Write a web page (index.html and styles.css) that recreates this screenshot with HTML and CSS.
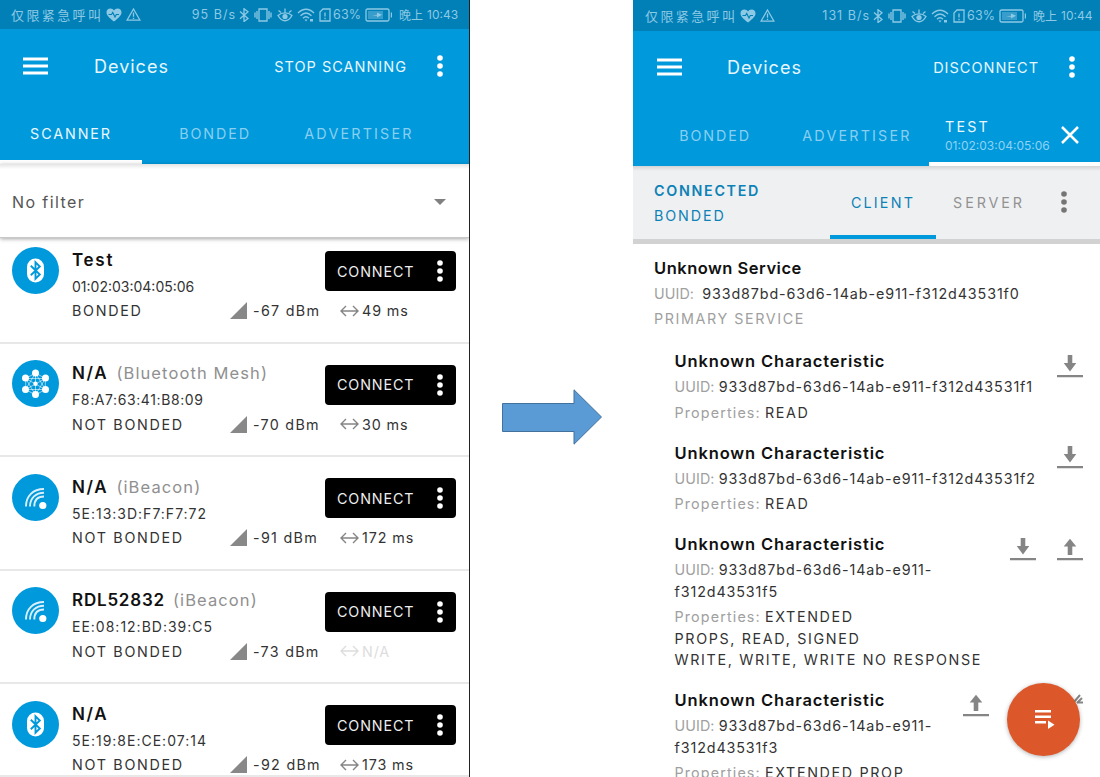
FILE: index.html
```html
<!DOCTYPE html>
<html lang="en">
<head>
<meta charset="utf-8">
<title>Devices</title>
<link rel="stylesheet" href="styles.css">
</head>
<body>
<svg class="defs" aria-hidden="true">
  <symbol id="heart" viewBox="0 0 16 14"><path fill="currentColor" d="M8 13.6C3 9.600.5 7.500.5 4.300.500 2 2.200.500 4.300.500 6 .5 7.300 1.400 8 2.600 8.700 1.400 10 .5 11.700.500 13.800.500 15.500 2 15.500 4.300 15.500 7.500 13 9.600 8 13.600z"/><path class="cut" d="M2.500 6.500h3l1.200-2 2.300 4.500 1.300-2.500H13"/></symbol>
  <symbol id="warn" viewBox="0 0 15 13"><path class="ln" d="M7.500 1 14 12.200H1z"/><path class="ln" d="M7.500 4.500v4.200M7.500 9.700v1.200"/></symbol>
  <symbol id="bt" viewBox="0 0 10 14"><path class="ln" d="M1 3.500l8 7-4 3V.7l4 3-8 7"/></symbol>
  <symbol id="vibrate" viewBox="0 0 18 14"><path class="ln" d="M5 1h8v12H5zM3 3v8M15 3v8M1 4.500v5M17 4.500v5"/></symbol>
  <symbol id="eye" viewBox="0 0 16 14"><path class="ln" d="M1 7.500c4 7 10 7 14 0C11 4 5 4 1 7.500zM8 4.500V.5M4 4.500 1.500 2.500M12 4.500 14.500 2.500"/><circle cx="8" cy="8.500" r="2.600" fill="currentColor"/></symbol>
  <symbol id="wifi" viewBox="0 0 18 14"><path class="ln" d="M1 5c5-5 11-5 16 0M3.500 7.800c3.500-3.500 7.500-3.500 11 0M6 10.300c2-2 4-2 6 0"/><path fill="currentColor" d="M7.500 11.500h3L9 13.500zM13 11h3v2.500h-3z"/></symbol>
  <symbol id="sim" viewBox="0 0 12 14"><path class="ln" d="M4 1h7v12H1V4zM6 4.500v4M6 9.700v1.500"/></symbol>
  <symbol id="battery" viewBox="0 0 28 14"><rect class="ln" x="1" y="1" width="23" height="12" rx="1.500"/><path opacity=".4" fill="currentColor" d="M3 3h15v8H3z"/><path fill="currentColor" d="M7 7.500l5-.8V4.500l5 2.300-5 2.700V7.800zM25.800 4.500h1.200v5h-1.200z"/></symbol>
  <symbol id="menu" viewBox="0 0 25 18"><path fill="#fff" d="M0 .5h25v3H0zM0 7.500h25v3H0zM0 14.500h25v3H0z"/></symbol>
  <symbol id="dots" viewBox="0 0 6 22"><g fill="currentColor"><circle cx="3" cy="3" r="2.800"/><circle cx="3" cy="11" r="2.800"/><circle cx="3" cy="19" r="2.800"/></g></symbol>
  <symbol id="d-bt" viewBox="0 0 47 47"><circle cx="23.500" cy="23.500" r="23.500" fill="#0099dc"/><rect x="15" y="11.500" width="17" height="24" rx="8.500" fill="#fff"/><path fill="none" stroke="#0099dc" stroke-width="1.900" d="M18.800 18.800l9 8.700-4.300 4.200V15.300l4.300 4.200-9 8.700"/></symbol>
  <symbol id="d-mesh" viewBox="0 0 47 47"><circle cx="23.500" cy="23.500" r="23.500" fill="#0099dc"/><path fill="none" stroke="#fff" stroke-width=".7" opacity=".8" d="M23.500 13l9.800 5.500v11L23.500 35l-9.800-5.500v-11zM23.500 13l9.800 16.500H13.700zM23.500 35l-9.800-16.500h19.600zM23.500 13v22M13.700 18.500l19.600 11M33.300 18.500l-19.600 11"/><g fill="#fff"><circle cx="23.500" cy="13" r="3.500"/><circle cx="33.500" cy="18" r="3.500"/><circle cx="33.500" cy="29.500" r="3.500"/><circle cx="23.500" cy="34.500" r="3.500"/><circle cx="13.500" cy="29.500" r="3.500"/><circle cx="13.500" cy="18" r="3.500"/><circle cx="23.500" cy="23.800" r="2.200"/></g></symbol>
  <symbol id="d-beacon" viewBox="0 0 47 47"><circle cx="23.500" cy="23.500" r="23.500" fill="#0099dc"/><path fill="none" stroke="#d9f0fb" stroke-width="1.900" d="M14 32.500C14 22 21 15 32 15M18 32.500C18 24 24 18.700 32 18.700M22.300 32.500C22.300 26 26 22.500 32 22.500"/><circle cx="30.800" cy="31.500" r="3.600" fill="#fff"/></symbol>
  <symbol id="signal" viewBox="0 0 17 17"><path fill="#888" d="M17 0v17H0z"/></symbol>
  <symbol id="range" viewBox="0 0 19 12"><path fill="none" stroke="currentColor" stroke-width="1.400" d="M1 6h17M6 1 1 6l5 5M13 1l5 5-5 5"/></symbol>
  <symbol id="down" viewBox="0 0 26 23"><path fill="#858585" d="M10.700 0h4.600v8h4L13 16.500 6.700 8h4zM0 20h26v2.200H0z"/></symbol>
  <symbol id="up" viewBox="0 0 26 23"><path fill="#858585" d="M10.700 17h4.600V8.500h4L13 .8 6.700 8.500h4zM0 20h26v2.200H0z"/></symbol>
</svg>

<main class="stage">
  <section class="phone left">
    <div class="status">
      <span class="carrier">仅限紧急呼叫</span><svg class="i-heart"><use href="#heart"/></svg><svg class="i-warn"><use href="#warn"/></svg>
      <span class="rate">95 B/s</span><svg class="i-bt"><use href="#bt"/></svg><svg class="i-vib"><use href="#vibrate"/></svg><svg class="i-eye"><use href="#eye"/></svg><svg class="i-wifi"><use href="#wifi"/></svg><svg class="i-sim"><use href="#sim"/></svg><span class="pct">63%</span><svg class="i-bat"><use href="#battery"/></svg><span class="clock"><span class="cn">晚上</span><span>10:43</span></span>
    </div>
    <header class="bar">
      <svg class="i-menu"><use href="#menu"/></svg><h1>Devices</h1><span class="action scan">STOP SCANNING</span><svg class="i-dots"><use href="#dots"/></svg>
    </header>
    <nav class="tabs"><span class="tab on">SCANNER</span><span class="tab">BONDED</span><span class="tab adv">ADVERTISER</span></nav>
    <div class="filter"><span>No filter</span><i class="caret"></i></div>
    <ul class="devices">
      <li>
        <svg class="avatar"><use href="#d-bt"/></svg>
        <div class="info"><p class="name"><b>Test</b></p><p class="mac m1">01:02:03:04:05:06</p>
        <p class="meta"><span class="bond">BONDED</span><svg class="i-sig"><use href="#signal"/></svg><span class="dbm">-67 dBm</span><svg class="i-rng"><use href="#range"/></svg><span class="ms">49 ms</span></p></div>
        <div class="connect"><span>CONNECT</span><svg class="i-dots"><use href="#dots"/></svg></div>
      </li>
      <li>
        <svg class="avatar"><use href="#d-mesh"/></svg>
        <div class="info"><p class="name"><b>N/A</b><span class="kind">(Bluetooth Mesh)</span></p><p class="mac m2">F8:A7:63:41:B8:09</p>
        <p class="meta"><span class="bond">NOT BONDED</span><svg class="i-sig"><use href="#signal"/></svg><span class="dbm">-70 dBm</span><svg class="i-rng"><use href="#range"/></svg><span class="ms">30 ms</span></p></div>
        <div class="connect"><span>CONNECT</span><svg class="i-dots"><use href="#dots"/></svg></div>
      </li>
      <li>
        <svg class="avatar"><use href="#d-beacon"/></svg>
        <div class="info"><p class="name"><b>N/A</b><span class="kind">(iBeacon)</span></p><p class="mac">5E:13:3D:F7:F7:72</p>
        <p class="meta"><span class="bond">NOT BONDED</span><svg class="i-sig"><use href="#signal"/></svg><span class="dbm">-91 dBm</span><svg class="i-rng"><use href="#range"/></svg><span class="ms">172 ms</span></p></div>
        <div class="connect"><span>CONNECT</span><svg class="i-dots"><use href="#dots"/></svg></div>
      </li>
      <li>
        <svg class="avatar"><use href="#d-beacon"/></svg>
        <div class="info"><p class="name"><b class="rdl">RDL52832</b><span class="kind">(iBeacon)</span></p><p class="mac">EE:08:12:BD:39:C5</p>
        <p class="meta"><span class="bond">NOT BONDED</span><svg class="i-sig"><use href="#signal"/></svg><span class="dbm">-73 dBm</span><svg class="i-rng faint"><use href="#range"/></svg><span class="ms faint">N/A</span></p></div>
        <div class="connect"><span>CONNECT</span><svg class="i-dots"><use href="#dots"/></svg></div>
      </li>
      <li>
        <svg class="avatar"><use href="#d-bt"/></svg>
        <div class="info"><p class="name"><b>N/A</b></p><p class="mac">5E:19:8E:CE:07:14</p>
        <p class="meta"><span class="bond">NOT BONDED</span><svg class="i-sig"><use href="#signal"/></svg><span class="dbm">-92 dBm</span><svg class="i-rng"><use href="#range"/></svg><span class="ms">173 ms</span></p></div>
        <div class="connect"><span>CONNECT</span><svg class="i-dots"><use href="#dots"/></svg></div>
      </li>
    </ul>
  </section>

  <div class="between">
    <svg class="arrow" viewBox="0 0 100 56"><path fill="#5b9bd5" stroke="#41719c" stroke-width="1" d="M.5 14.500h71.500V.8L99.500 28 72 55.200V42.500H.5z"/></svg>
  </div>

  <section class="phone right">
    <div class="status">
      <span class="carrier">仅限紧急呼叫</span><svg class="i-heart"><use href="#heart"/></svg><svg class="i-warn"><use href="#warn"/></svg>
      <span class="rate">131 B/s</span><svg class="i-bt"><use href="#bt"/></svg><svg class="i-vib"><use href="#vibrate"/></svg><svg class="i-eye"><use href="#eye"/></svg><svg class="i-wifi"><use href="#wifi"/></svg><svg class="i-sim"><use href="#sim"/></svg><span class="pct">63%</span><svg class="i-bat"><use href="#battery"/></svg><span class="clock"><span class="cn">晚上</span><span>10:44</span></span>
    </div>
    <header class="bar">
      <svg class="i-menu"><use href="#menu"/></svg><h1>Devices</h1><span class="action disc">DISCONNECT</span><svg class="i-dots"><use href="#dots"/></svg>
    </header>
    <nav class="tabs"><span class="tab">BONDED</span><span class="tab adv">ADVERTISER</span>
      <div class="tab device on"><div><p class="dname">TEST</p><p class="daddr">01:02:03:04:05:06</p></div><svg class="i-x" viewBox="0 0 18 18"><path stroke="#fff" stroke-width="2.500" d="M1 1l16 16M17 1 1 17"/></svg></div>
    </nav>
    <div class="sub">
      <div class="state"><p class="conn">CONNECTED</p><p class="bonded">BONDED</p></div>
      <span class="side client">CLIENT</span><span class="side server">SERVER</span><svg class="i-dots"><use href="#dots"/></svg>
    </div>
    <div class="service">
      <h2>Unknown Service</h2>
      <p class="line"><span class="k wide">UUID:</span> <span class="hex">933d87bd-63d6-14ab-e911-f312d43531f0</span></p>
      <p class="line k primary">PRIMARY SERVICE</p>
    </div>
    <div class="chars">
      <article>
        <h2>Unknown Characteristic</h2>
        <p class="line"><span class="k">UUID:</span> <span class="hex">933d87bd-63d6-14ab-e911-f312d43531f1</span></p>
        <p class="line"><span class="k pr">Properties:</span> <span class="caps">READ</span></p>
        <div class="ops"><svg><use href="#down"/></svg></div>
      </article>
      <article>
        <h2>Unknown Characteristic</h2>
        <p class="line"><span class="k">UUID:</span> <span class="hex">933d87bd-63d6-14ab-e911-f312d43531f2</span></p>
        <p class="line"><span class="k pr">Properties:</span> <span class="caps">READ</span></p>
        <div class="ops"><svg><use href="#down"/></svg></div>
      </article>
      <article>
        <h2>Unknown Characteristic</h2>
        <p class="line"><span class="k">UUID:</span> <span class="hex">933d87bd-63d6-14ab-e911-<br>f312d43531f5</span></p>
        <p class="line"><span class="k pr">Properties:</span> <span class="caps">EXTENDED<br>PROPS, READ, SIGNED<br>WRITE, WRITE, WRITE NO RESPONSE</span></p>
        <div class="ops"><svg><use href="#down"/></svg><svg><use href="#up"/></svg></div>
      </article>
      <article>
        <h2>Unknown Characteristic</h2>
        <p class="line"><span class="k">UUID:</span> <span class="hex">933d87bd-63d6-14ab-e911-<br>f312d43531f3</span></p>
        <p class="line"><span class="k pr">Properties:</span> <span class="caps">EXTENDED PROP</span></p>
        <div class="ops"><svg><use href="#up"/></svg><svg viewBox="0 0 26 23"><path fill="#858585" d="M7 1h3v3H7z"/></svg><svg viewBox="0 0 26 23"><path stroke="#858585" stroke-width="2" d="M17 8l6-7M20 9l5-5M20 8.500h6"/></svg></div>
      </article>
    </div>
    <div class="fab"><svg viewBox="0 0 20 19"><path fill="#fff" d="M0 0h16v2.500H0zM0 5.500h16v2.500H0zM0 11h11v2.500H0zM13 10.500l6.500 4.300-6.500 4.200z"/></svg></div>
  </section>
</main>
</body>
</html>
```

FILE: styles.css
```css
* { box-sizing: border-box; margin: 0; padding: 0; }
body { width: 1100px; height: 777px; overflow: hidden; background: #fff; font-family: Inter, "Noto Sans CJK SC", sans-serif; font-size: 14.300px; color: #333; }
.defs { position: absolute; width: 0; height: 0; }
svg { display: block; flex: none; }
.ln { fill: none; stroke: currentColor; stroke-width: 1.300; }
.cut { fill: none; stroke: #0080b7; stroke-width: 1.100; }
.stage { display: flex; height: 777px; }
.phone { position: relative; display: flex; flex-direction: column; height: 777px; overflow: hidden; white-space: nowrap; }
.left { width: 470px; border-right: 1px solid #222; }
.right { width: 467px; }
.between { width: 163px; padding: 389px 0 0 32px; }
.arrow { width: 100px; height: 56px; }

/* status bar */
.status { display: flex; align-items: center; flex: none; height: 29px; padding-left: 11px; background: #0080b7; color: #8dc9e5; font-size: 12.500px; }
.carrier { width: 95px; font-size: 13px; letter-spacing: 2.400px; }
.i-heart { width: 16px; height: 14px; }
.i-warn { width: 15px; height: 13px; margin-left: 4px; }
.rate { width: 95px; margin-right: 3px; text-align: right; letter-spacing: 1px; }
.i-bt { width: 10px; height: 14px; }
.i-vib { width: 18px; height: 14px; margin-left: 5px; }
.i-eye { width: 16px; height: 14px; margin-left: 5px; }
.i-wifi { width: 18px; height: 14px; margin-left: 4px; }
.i-sim { width: 12px; height: 14px; margin-left: 4px; }
.pct { width: 30px; margin-left: 2px; letter-spacing: .2px; }
.i-bat { width: 28px; height: 14px; margin-left: 2px; }
.clock { display: flex; align-items: center; gap: 4px; margin-left: 6px; font-size: 12px; }
.cn { font-size: 12px; }

/* app bar */
.bar { display: flex; align-items: center; flex: none; height: 75px; padding: 0 26px 0 23px; background: #0099dc; color: #e8f6fd; }
.i-menu { width: 25px; height: 18px; margin-top: -2px; }
.bar h1 { margin-left: 46px; font-size: 18px; font-weight: 400; letter-spacing: 1px; }
.action { margin-left: auto; margin-right: 30px; font-size: 14.500px; letter-spacing: 1px; }
.i-dots { width: 6px; height: 22px; color: #fff; }
.bar .i-dots { margin-top: -1px; }
.tabs { display: flex; flex: none; height: 60px; background: #0099dc; color: #8bcff0; }
.tab { width: 142px; padding-top: 21px; text-align: center; letter-spacing: 1.900px; line-height: 18px; }
.tab.adv { letter-spacing: 2.200px; }
.left .tab:nth-child(2) { width: 146px; }
.tab.on { color: #eaf7fd; border-bottom: 4px solid #fff; }

.filter { display: flex; align-items: center; justify-content: space-between; flex: none; position: relative; height: 74px; padding: 3px 23px 0 12px; font-size: 16px; letter-spacing: 1.400px; color: #555; background: linear-gradient(#e4e4e4, #fff 5px); border-bottom: 1px solid #c8c8c8; box-shadow: 0 1px 4px rgba(0,0,0,.35); }
.caret { border: 6.500px solid transparent; border-top-color: #808080; border-bottom: 0; }
.devices { list-style: none; margin-top: -8px; }
.devices li { display: flex; height: 113.500px; padding: 17px 13px 0 12px; border-bottom: 2px solid #e8e8e8; }
.devices li:last-child { height: 93px; }
.avatar { width: 47px; height: 47px; margin-top: -.5px; }
.info { width: 252px; margin: -1px 0 0 13px; }
.info p { display: flex; align-items: center; }
.name { height: 27px; font-size: 16.500px; letter-spacing: 1.100px; color: #111; }
.name b { font-weight: 600; font-size: 17px; letter-spacing: 1.700px; }
.name .rdl { letter-spacing: .8px; }
.kind { margin-left: 8px; color: #909090; }
.mac { height: 26px; letter-spacing: 1px; font-size: 14px; }
.m1 { letter-spacing: 0; }
.m2 { letter-spacing: .6px; }
.meta { height: 23px; width: 350px; }
.bond { width: 158px; letter-spacing: 1.700px; }
.i-sig { width: 17px; height: 17px; }
.dbm { width: 93px; padding-left: 6px; letter-spacing: 1.300px; }
.i-rng { width: 19px; height: 12px; color: #858585; }
.ms { margin-left: 3px; letter-spacing: .9px; }
.faint, .i-rng.faint { color: #ddd; }
.connect { display: flex; align-items: center; justify-content: space-between; width: 131px; height: 40px; margin: 4px 0 0 1px; padding: 0 13px 0 12px; border-radius: 4px; background: #000; color: #eee; letter-spacing: .9px; position: relative; }

/* connected device */
.right .status { height: 31px; padding-left: 12px; }
.right .bar { height: 73px; padding: 0 25px 0 24px; }
.right .bar h1 { margin-left: 45px; }
.right .tabs { height: 62px; padding-left: 11px; }
.right .tab { padding-top: 23px; }
.right .device { display: flex; justify-content: space-between; width: 171px; margin-left: 1px; padding: 14px 21px 0 16px; text-align: left; letter-spacing: 2.200px; }
.right .device .daddr { font-size: 12px; letter-spacing: 0; color: #8fd2f2; line-height: 20px; }
.i-x { width: 18px; height: 18px; margin-top: 8px; }
.sub { display: flex; flex: none; height: 78px; padding-left: 21px; background: linear-gradient(#d2d4d6, #eff0f2 5px); border-bottom: 5px solid #d2d2d2; color: #0d82b6; }
.state { width: 176px; padding-top: 12px; line-height: 25px; letter-spacing: 1.900px; }
.conn { font-weight: 600; letter-spacing: 1.700px; }
.side { width: 106px; height: 73px; padding-top: 28px; text-align: center; letter-spacing: 2.200px; }
.client { border-bottom: 4px solid #0099dc; }
.server { color: #929292; letter-spacing: 2.900px; }
.sub .i-dots { margin: 25px 0 0 19px; color: #757575; }
.service { padding: 11px 0 0 21px; flex: none; }
h2 { height: 26px; line-height: 26px; font-size: 16.500px; font-weight: 600; color: #111; letter-spacing: .85px; }
.service h2 { letter-spacing: .5px; }
.line { padding: 2px 0; line-height: 21.500px; letter-spacing: .1px; font-size: 14.300px; }
.k { color: #a0a0a0; }
.pr { letter-spacing: 1.150px; }
.wide { margin-right: 4px; }
.hex { letter-spacing: .9px; }
.primary { letter-spacing: 1.600px; padding-top: 1px; }
.caps { letter-spacing: 1.650px; }
.chars { padding: 17px 17px 0 41.500px; }
article { position: relative; margin-bottom: 14.500px; }
.ops { position: absolute; top: 6.500px; right: 0; display: flex; gap: 21px; }
.ops svg { width: 26px; height: 23px; }
.fab { position: absolute; left: 374px; top: 683px; width: 73px; height: 73px; border-radius: 50%; background: #dc5729; box-shadow: 0 1px 4px rgba(0,0,0,.3); display: grid; place-items: center; }
.fab svg { width: 20px; height: 19px; margin-left: 2px; }
```
